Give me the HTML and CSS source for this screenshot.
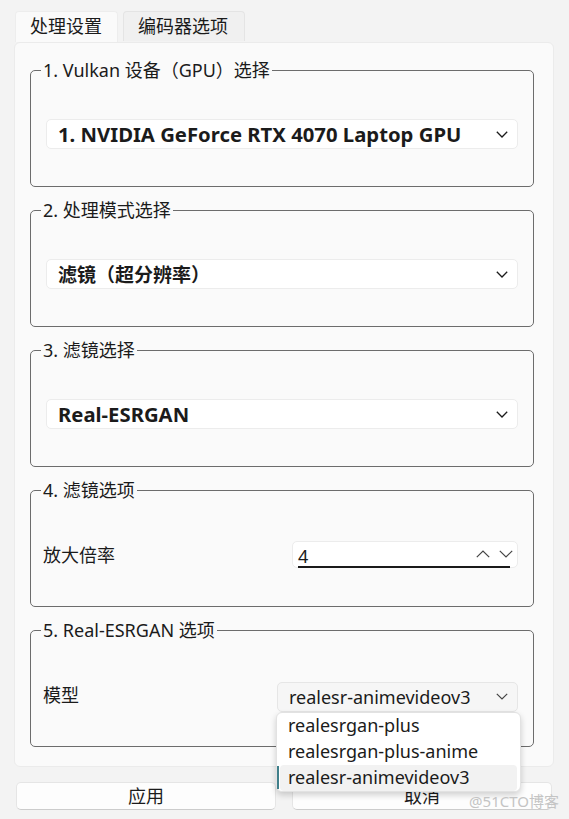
FILE: index.html
```html
<!DOCTYPE html>
<html lang="zh-CN">
<head>
<meta charset="utf-8">
<title>处理设置</title>
<link rel="stylesheet" href="styles.css">
</head>
<body>
<div class="window">
  <div class="tabs">
    <div class="tab active">处理设置</div>
    <div class="tab">编码器选项</div>
  </div>
  <div class="panel">
    <fieldset class="group">
      <legend>1. Vulkan 设备（GPU）选择</legend>
      <div class="combo bold latin">
        <span>1. NVIDIA GeForce RTX 4070 Laptop GPU</span>
        <svg class="chev" viewBox="0 0 12 7" width="12" height="7"><path d="M0.8 0.8 L6 6 L11.2 0.8" fill="none" stroke="#1b1b1b" stroke-width="1.3"/></svg>
      </div>
    </fieldset>
    <fieldset class="group">
      <legend>2. 处理模式选择</legend>
      <div class="combo bold">
        <span>滤镜（超分辨率）</span>
        <svg class="chev" viewBox="0 0 12 7" width="12" height="7"><path d="M0.8 0.8 L6 6 L11.2 0.8" fill="none" stroke="#1b1b1b" stroke-width="1.3"/></svg>
      </div>
    </fieldset>
    <fieldset class="group">
      <legend>3. 滤镜选择</legend>
      <div class="combo bold latin">
        <span>Real-ESRGAN</span>
        <svg class="chev" viewBox="0 0 12 7" width="12" height="7"><path d="M0.8 0.8 L6 6 L11.2 0.8" fill="none" stroke="#1b1b1b" stroke-width="1.3"/></svg>
      </div>
    </fieldset>
    <fieldset class="group">
      <legend>4. 滤镜选项</legend>
      <div class="row">
        <span class="label">放大倍率</span>
        <div class="spin">
          <span class="spin-value">4</span>
          <svg class="spin-btn" viewBox="0 0 14 8" width="14" height="8"><path d="M0.8 7.2 L7 1 L13.2 7.2" fill="none" stroke="#444" stroke-width="1.2"/></svg>
          <svg class="spin-btn" viewBox="0 0 14 8" width="14" height="8"><path d="M0.8 0.8 L7 7 L13.2 0.8" fill="none" stroke="#444" stroke-width="1.2"/></svg>
          <div class="spin-line"></div>
        </div>
      </div>
    </fieldset>
    <fieldset class="group">
      <legend>5. Real-ESRGAN 选项</legend>
      <div class="row">
        <span class="label">模型</span>
        <div class="model-wrap">
          <div class="combo small pressed">
            <span>realesr-animevideov3</span>
            <svg class="chev" viewBox="0 0 12 7" width="12" height="7"><path d="M0.8 0.8 L6 6 L11.2 0.8" fill="none" stroke="#444" stroke-width="1.2"/></svg>
          </div>
          <div class="popup">
            <div class="item">realesrgan-plus</div>
            <div class="item">realesrgan-plus-anime</div>
            <div class="item selected">realesr-animevideov3</div>
          </div>
        </div>
      </div>
    </fieldset>
  </div>
  <div class="buttons">
    <div class="btn">应用</div>
    <div class="btn">取消</div>
  </div>
  <div class="watermark">@51CTO博客</div>
</div>
</body>
</html>
```

FILE: styles.css
```css
* { box-sizing: border-box; }

html, body {
  margin: 0;
  padding: 0;
}

body {
  background: #f3f3f3;
  font-family: "Noto Sans", "Noto Sans CJK SC", sans-serif;
  font-size: 18px;
  color: #1b1b1b;
  width: 569px;
  height: 819px;
  overflow: hidden;
}

.window {
  position: relative;
  width: 569px;
  height: 819px;
}

.tabs {
  display: flex;
  align-items: flex-end;
  gap: 5px;
  padding: 11px 0 0 15px;
  height: 42px;
}

.tab {
  height: 30px;
  line-height: 28px;
  padding: 0 14px;
  background: #f0f0f0;
  border: 1px solid #e4e4e4;
  border-bottom: none;
  border-radius: 4px 4px 0 0;
  font-size: 18px;
  margin-bottom: 1px;
}

.tab.active {
  width: 103px;
  background: #fafafa;
  border-color: #ededed;
  margin-bottom: 0;
  height: 31px;
}

.tab:not(.active) {
  width: 122px;
}

.panel {
  position: relative;
  margin-left: 14px;
  width: 540px;
  height: 725px;
  background: #fafafa;
  border: 1px solid #ebebeb;
  border-radius: 6px;
  padding: 15px 19px 0 15px;
  display: flex;
  flex-direction: column;
  gap: 11px;
}

.group {
  margin: 0;
  border: 1px solid #6c6c6c;
  border-radius: 5px;
  padding: 37px 15px 37px 15px;
  min-width: 0;
}

.group legend {
  padding: 0 2px;
  margin-left: -5px;
  font-size: 18px;
  line-height: 24px;
  color: #1b1b1b;
}

.combo {
  height: 30px;
  background: #ffffff;
  border: 1px solid #ececec;
  border-radius: 5px;
  display: flex;
  align-items: center;
  justify-content: space-between;
  padding: 0 9px 0 11px;
  font-size: 19px;
}

.combo.bold {
  font-weight: 700;
}

.combo.latin {
  font-size: 20.3px;
}

.combo.small {
  font-size: 18px;
  font-weight: 400;
}

.combo.pressed {
  background: #f6f6f6;
  border-color: #e6e6e6;
}

.chev {
  flex: none;
}

.row {
  display: flex;
  align-items: center;
  justify-content: space-between;
  height: 30px;
}

.label {
  margin-left: -3px;
}

.spin {
  position: relative;
  width: 226px;
  height: 27px;
  background: #ffffff;
  border: 1px solid #ececec;
  border-radius: 5px;
  display: flex;
  align-items: center;
  padding: 0 4px 0 5px;
  gap: 9px;
}

.spin-value {
  flex: 1;
  margin-top: 3px;
}

.spin-btn {
  flex: none;
}

.spin-line {
  position: absolute;
  left: 5px;
  right: 7px;
  bottom: -1px;
  height: 2px;
  background: #1a1a1a;
}

.model-wrap {
  position: relative;
  width: 241px;
  margin-top: 5px;
}

.popup {
  position: absolute;
  left: -1px;
  top: 30px;
  width: 245px;
  height: 80px;
  background: #ffffff;
  border: 1px solid #e2e2e2;
  border-radius: 6px;
  box-shadow: 0 3px 6px rgba(0, 0, 0, 0.18);
  padding: 0 3px 0 3px;
  z-index: 10;
}

.item {
  position: relative;
  height: 26px;
  line-height: 25px;
  padding-left: 8px;
  font-size: 18px;
  border-radius: 4px;
}

.item.selected {
  background: #f2f2f2;
}

.item.selected::before {
  content: "";
  position: absolute;
  left: -3px;
  top: 1px;
  width: 2px;
  height: 23px;
  background: #3f7f8a;
}

.buttons {
  display: flex;
  gap: 16px;
  padding: 15px 0 0 16px;
}

.btn {
  width: 260px;
  height: 28px;
  line-height: 26px;
  text-align: center;
  background: #fdfdfd;
  border: 1px solid #e5e5e5;
  border-bottom-color: #cccccc;
  border-radius: 5px;
  font-size: 18px;
}

.watermark {
  position: absolute;
  right: 10px;
  bottom: 8px;
  font-size: 15px;
  color: #c4c4c4;
  z-index: 20;
}
```
